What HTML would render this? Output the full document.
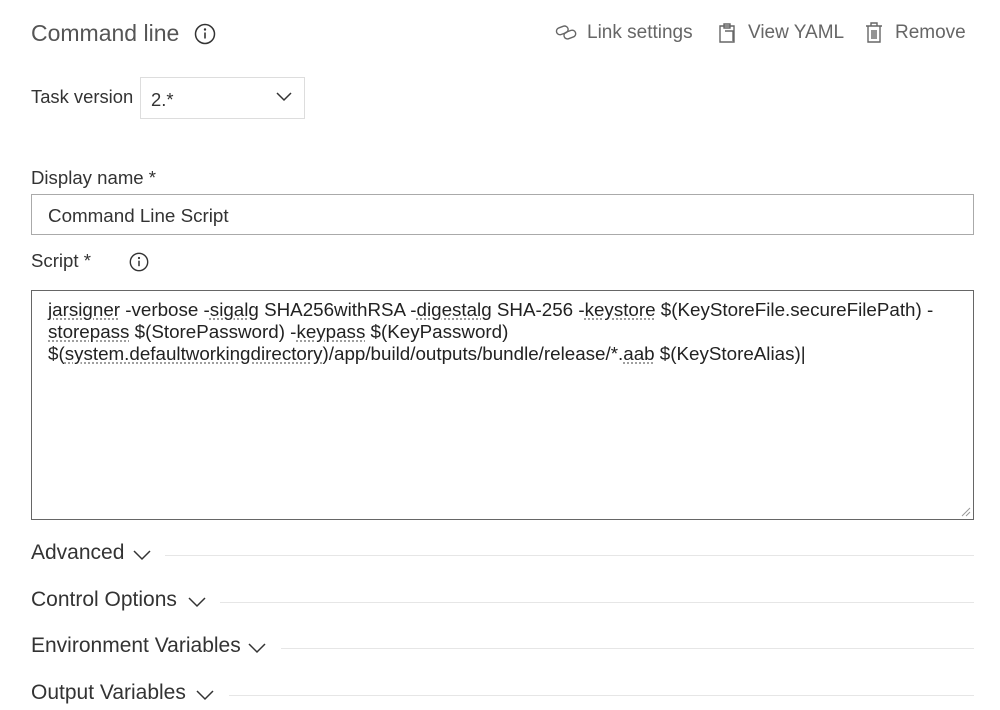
<!DOCTYPE html>
<html><head><style>
body{margin:0;width:1000px;height:710px;background:#fff;font-family:"Liberation Sans",sans-serif;color:#333;position:relative;overflow:hidden}
.a{position:absolute;white-space:nowrap}
.u{text-decoration:underline dotted #999;text-underline-offset:3px}
.line{position:absolute;height:1px;background:#e6e6e6}
</style></head><body>
<div class="a" style="left:31px;top:20px;font-size:23px;color:#555">Command line</div>
<svg class="a" style="left:194px;top:23px" width="22" height="22"><circle cx="11" cy="11" r="9.5" fill="none" stroke="#333" stroke-width="1.5"/><circle cx="11" cy="6.5" r="1.2" fill="#333"/><path d="M11 9.5v6" stroke="#333" stroke-width="1.6"/></svg>
<svg class="a" style="left:555px;top:23px" width="24" height="20"><rect x="1.5" y="4" width="12" height="7" rx="3.5" transform="rotate(-20 7 8)" fill="none" stroke="#666" stroke-width="1.4"/><rect x="9" y="8" width="12" height="7" rx="3.5" transform="rotate(-20 15 12)" fill="none" stroke="#666" stroke-width="1.4"/></svg>
<div class="a" style="left:587px;top:22px;font-size:19px;color:#666">Link settings</div>
<svg class="a" style="left:716px;top:21px" width="22" height="24"><path d="M4 5h14v16H4z M8 3h6v4H8z M9 10h8v10" fill="none" stroke="#666" stroke-width="1.4"/></svg>
<div class="a" style="left:748px;top:22px;font-size:19px;color:#666">View YAML</div>
<svg class="a" style="left:864px;top:21px" width="20" height="24"><path d="M2 5h16M7 5V2h6v3M4 5v16h12V5M8 9v9M10 9v9M12 9v9" fill="none" stroke="#666" stroke-width="1.4"/></svg>
<div class="a" style="left:895px;top:22px;font-size:19px;color:#666">Remove</div>

<div class="a" style="left:31px;top:86px;font-size:18.4px">Task version</div>
<div class="a" style="left:140px;top:77px;width:165px;height:42px;border:1px solid #ddd;box-sizing:border-box"></div>
<div class="a" style="left:151px;top:89px;font-size:18.4px">2.*</div>
<svg class="a" style="left:276px;top:92px" width="16" height="10"><path d="M1 1l7 7 7-7" fill="none" stroke="#333" stroke-width="1.5"/></svg>

<div class="a" style="left:31px;top:167px;font-size:18.6px">Display name *</div>
<div class="a" style="left:31px;top:194px;width:943px;height:41px;border:1px solid #aaa;box-sizing:border-box"></div>
<div class="a" style="left:48px;top:205px;font-size:18.8px">Command Line Script</div>
<div class="a" style="left:31px;top:250px;font-size:18.6px">Script *</div>
<svg class="a" style="left:129px;top:252px" width="20" height="20"><circle cx="10" cy="10" r="8.7" fill="none" stroke="#333" stroke-width="1.4"/><circle cx="10" cy="6" r="1.1" fill="#333"/><path d="M10 8.7v5.5" stroke="#333" stroke-width="1.5"/></svg>
<div class="a" style="left:31px;top:290px;width:943px;height:230px;border:1px solid #666;box-sizing:border-box"></div>
<svg class="a" style="left:961px;top:507px" width="10" height="10"><path d="M9 1L1 9M9 5L5 9" stroke="#999"/></svg>
<div class="a" style="left:48px;top:299px;font-size:18.8px;line-height:22px;color:#222">
<span class="u">jarsigner</span> -verbose -<span class="u">sigalg</span> SHA256withRSA -<span class="u">digestalg</span> SHA-256 -<span class="u">keystore</span> $(KeyStoreFile.secureFilePath) -<br>
<span class="u">storepass</span> $(StorePassword) -<span class="u">keypass</span> $(KeyPassword)<br>
$(<span class="u">system.defaultworkingdirectory</span>)/app/build/outputs/bundle/release/*.<span class="u">aab</span> $(KeyStoreAlias)|</div>

<div class="a" style="left:31px;top:541px;font-size:21px">Advanced</div>
<svg class="a" style="left:133px;top:550px" width="18" height="11"><path d="M1 1l8 8 8-8" fill="none" stroke="#333" stroke-width="1.5"/></svg>
<div class="line" style="left:165px;top:555px;width:809px"></div>
<div class="a" style="left:31px;top:588px;font-size:21px">Control Options</div>
<svg class="a" style="left:188px;top:597px" width="18" height="11"><path d="M1 1l8 8 8-8" fill="none" stroke="#333" stroke-width="1.5"/></svg>
<div class="line" style="left:220px;top:602px;width:754px"></div>
<div class="a" style="left:31px;top:634px;font-size:21px">Environment Variables</div>
<svg class="a" style="left:248px;top:643px" width="18" height="11"><path d="M1 1l8 8 8-8" fill="none" stroke="#333" stroke-width="1.5"/></svg>
<div class="line" style="left:281px;top:648px;width:693px"></div>
<div class="a" style="left:31px;top:681px;font-size:21px">Output Variables</div>
<svg class="a" style="left:196px;top:690px" width="18" height="11"><path d="M1 1l8 8 8-8" fill="none" stroke="#333" stroke-width="1.5"/></svg>
<div class="line" style="left:229px;top:695px;width:745px"></div>
</body></html>
